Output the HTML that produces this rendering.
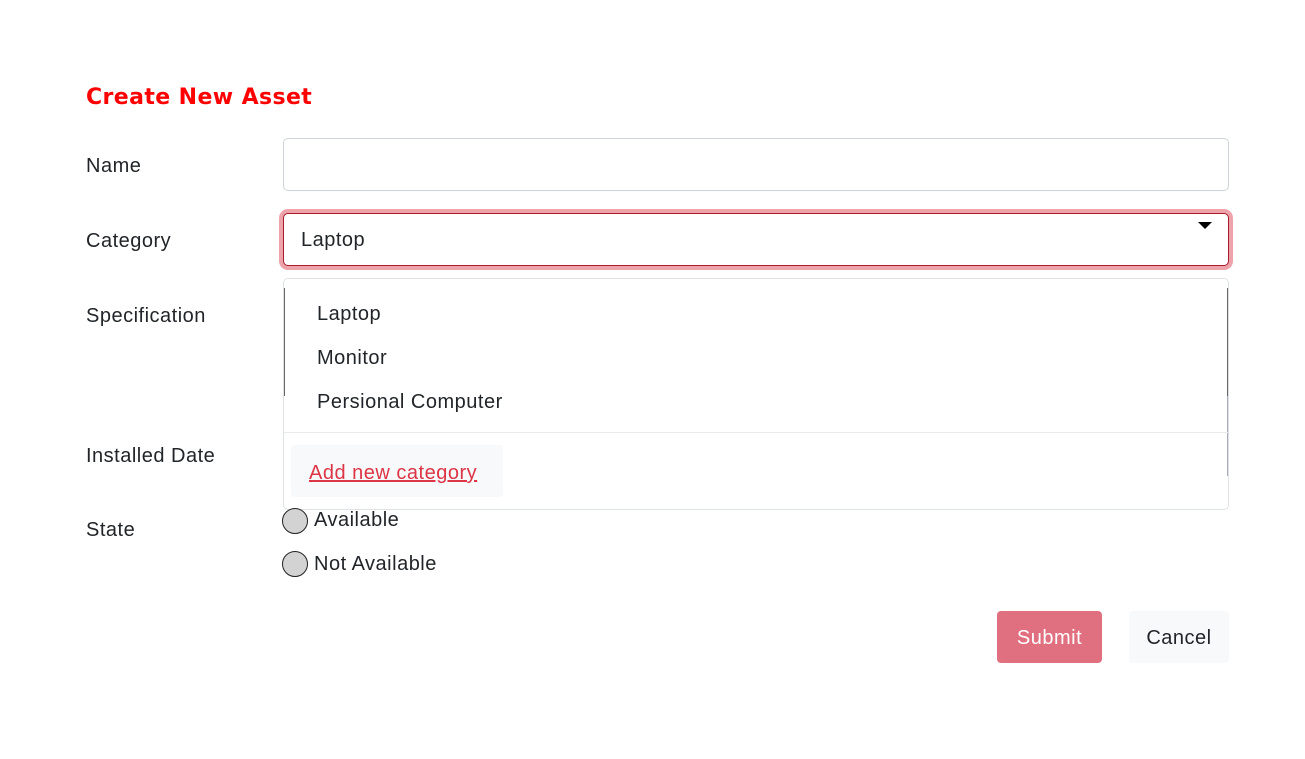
<!DOCTYPE html>
<html><head><meta charset="utf-8"><style>
*{box-sizing:border-box;margin:0;padding:0}
body{width:1305px;height:759px;background:#fff;font-family:"Liberation Sans",sans-serif;color:#212529;position:relative;overflow:hidden}
.a{position:absolute}
.t{font-size:20px;letter-spacing:0.5px}
.lbl{font-size:20px;left:86px;letter-spacing:0.5px}
.title{left:86px;top:85px;font-family:"DejaVu Sans","Liberation Sans",sans-serif;font-weight:bold;font-size:22px;color:#ff0000;letter-spacing:0.4px}
.radio{width:26px;height:26px;border-radius:50%;background:#d3d3d3;border:1px solid #222}
</style></head><body>
<div class="a title">Create New Asset</div>
<div class="a lbl" style="top:155px">Name</div>
<div class="a lbl" style="top:230px">Category</div>
<div class="a lbl" style="top:305px">Specification</div>
<div class="a lbl" style="top:445px">Installed Date</div>
<div class="a lbl" style="top:519px">State</div>

<div class="a" style="left:283px;top:138px;width:946px;height:53px;border:1px solid #ced4da;border-radius:5px"></div>
<div class="a" style="left:279px;top:209px;width:954px;height:61px;border-radius:9px;background:#eea3ab"></div>
<div class="a" style="left:283px;top:213px;width:946px;height:53px;border:1px solid #a61c2c;border-radius:5px;background:#fff"></div>
<div class="a t" style="left:301px;top:229px">Laptop</div>
<div class="a" style="left:1198px;top:222px;width:0;height:0;border-left:7px solid transparent;border-right:7px solid transparent;border-top:7px solid #000"></div>

<div class="a" style="left:283px;top:278px;width:946px;height:232px;border:1px solid #dee2e6;border-radius:5px;background:#fff"></div>
<div class="a" style="left:284px;top:288px;width:1px;height:108px;background:#666"></div>
<div class="a" style="left:1227px;top:288px;width:1px;height:108px;background:#666"></div>
<div class="a" style="left:1227px;top:396px;width:1px;height:80px;background:#aab"></div>
<div class="a t" style="left:317px;top:303px">Laptop</div>
<div class="a t" style="left:317px;top:347px">Monitor</div>
<div class="a t" style="left:317px;top:391px">Persional Computer</div>
<div class="a" style="left:284px;top:432px;width:944px;height:1px;background:#e9ecef"></div>
<div class="a" style="left:291px;top:445px;width:212px;height:52px;background:#f8f9fa;border-radius:4px"></div>
<div class="a t" style="left:309px;top:462px;color:#dc3545;text-decoration:underline">Add new category</div>

<div class="a radio" style="left:282px;top:508px"></div>
<div class="a t" style="left:314px;top:509px">Available</div>
<div class="a radio" style="left:282px;top:551px"></div>
<div class="a t" style="left:314px;top:553px">Not Available</div>

<div class="a t" style="left:997px;top:611px;width:105px;height:52px;background:#e07080;border-radius:4px;color:#fff;text-align:center;line-height:54px">Submit</div>
<div class="a t" style="left:1129px;top:611px;width:100px;height:52px;background:#f8f9fa;border-radius:4px;text-align:center;line-height:54px">Cancel</div>
</body></html>
